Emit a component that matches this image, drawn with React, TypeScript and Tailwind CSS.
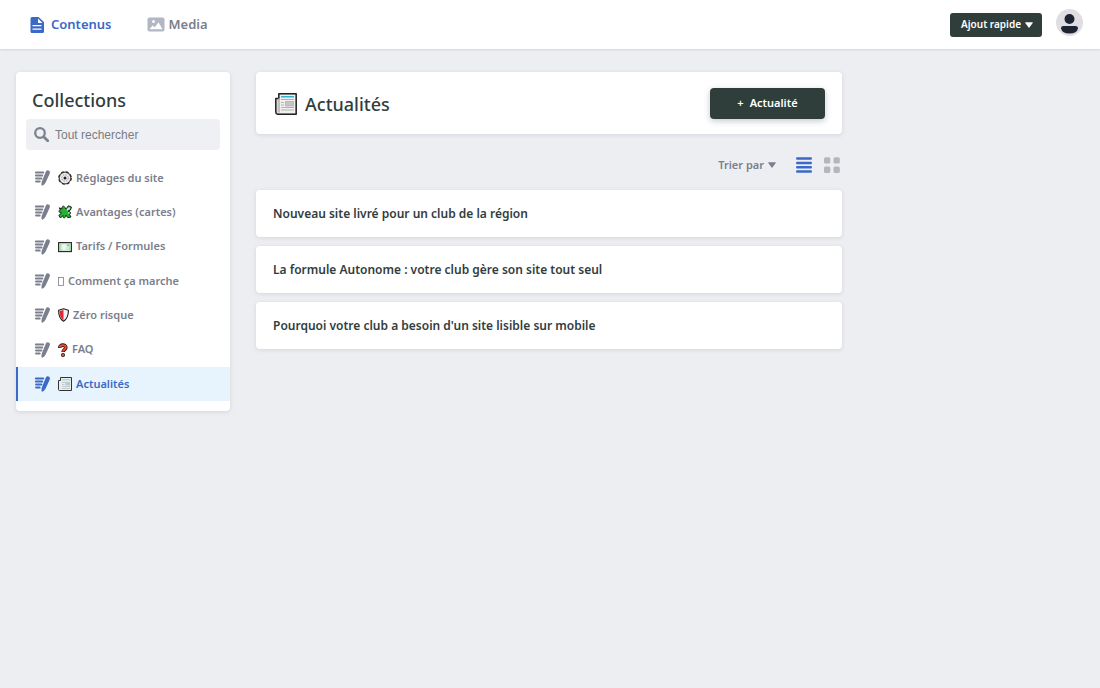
import React from 'react';

type IconProps = { className?: string };

const FileIcon = () => (
  <svg viewBox="0 0 14 16" className="h-4 w-[14px] shrink-0" aria-hidden="true">
    <path fill="currentColor" d="M2 0H8.500L14 5V14.500A1.500 1.500 0 0 1 12.500 16H2A1.500 1.500 0 0 1 .5 14.500V1.500A1.500 1.500 0 0 1 2 0Z" />
    <path fill="#fff" d="M8 1.500V6H12.500Z M2.500 8H11.500V9.200H2.500Z M2.500 11.500H11.500V12.700H2.500Z" />
  </svg>
);

const MediaIcon = () => (
  <svg viewBox="0 0 18 15" className="h-[15px] w-[18px] shrink-0 text-[#b3b6c3]" aria-hidden="true">
    <rect x=".5" y=".5" width="17" height="14" rx="2" fill="currentColor" />
    <circle cx="6.500" cy="4.500" r="1.500" fill="#fff" />
    <path fill="#fff" d="M2.500 12.300 5.500 8.500 7.800 10.300 11.500 5.300 15.500 12.300Z" />
  </svg>
);

const SearchIcon = () => (
  <svg viewBox="0 0 15 15" className="h-[15px] w-[15px] shrink-0 text-[#7b8290]" fill="none" stroke="currentColor" aria-hidden="true">
    <circle cx="6" cy="6" r="4.800" strokeWidth="2.300" />
    <path d="m9.700 9.700 4 4" strokeWidth="2.800" strokeLinecap="round" />
  </svg>
);

const WriteIcon = () => (
  <svg viewBox="0 0 16 16" className="h-4 w-4 shrink-0" aria-hidden="true">
    <path d="M1.800 2.500H9.300M1.800 5.500H8.300M2 8.500H7.500M2 11.500H5.800" stroke="currentColor" strokeWidth="1.800" strokeLinecap="round" />
    <path fill="currentColor" d="M12 1.200C12.900-.5 16.300.4 15.900 2.700L15.300 4.600 11.500 12.800Q10.500 14.600 8.300 15.700L7.600 15.200Q7.200 13.200 8 11Z" />
  </svg>
);

const CaretIcon = ({ className }: IconProps) => (
  <svg viewBox="0 0 8 6" className={className} aria-hidden="true">
    <path fill="currentColor" d="M.5.300H7.500Q8 .3 7.700.9L4.400 5.500Q4 6 3.600 5.500L.3.900Q0 .3.500.3Z" />
  </svg>
);

const GearEmoji = () => (
  <svg viewBox="0 0 14 14" className="h-[14px] w-[14px]" aria-hidden="true">
    <circle cx="7" cy="7" r="5.800" fill="#eee" stroke="#555" strokeWidth="1.200" />
    <circle cx="7" cy="7" r="6.300" fill="none" stroke="#222" strokeWidth="1.100" strokeDasharray="2.900 2.048" />
    <circle cx="7" cy="7" r="3.200" fill="none" stroke="#999" strokeWidth="1" strokeDasharray="1.500 1" />
    <circle cx="7" cy="7" r="1.500" fill="#222" />
  </svg>
);

const PuzzleEmoji = () => (
  <svg viewBox="0 0 14 14" className="h-[14px] w-[14px]" aria-hidden="true">
    <path fill="#28b030" stroke="#15251a" strokeWidth="1" strokeLinejoin="round" d="M1.200 2.800 4 4C3.500.6 6.500.2 7 3.200L8.300 3.700 10.300.8 13.400 2 12.500 5 10 6.200C12.500 6.200 13.500 8.500 11.500 9.400L13 12 9.800 12.700 8 10.200C7.600 13.800 4.300 13.500 5 10.500L2.500 13 .8 10.500 3.500 8C.5 7.800.3 5 2.500 5.200Z" />
    <path fill="#c9e7f2" d="m9.300 3.600 1.500-1.400 1.500.5-.5 1.500-2 1.400-1.300-.4Z" />
    <path fill="#c9e7f2" d="M10 7.200H11.500V8.400H10Z" />
  </svg>
);

const MoneyEmoji = () => (
  <svg viewBox="0 0 14 14" className="h-[14px] w-[14px]" aria-hidden="true">
    <rect x=".6" y="2.600" width="12.800" height="9" fill="#cdeed2" stroke="#222" strokeWidth="1.100" />
    <path fill="#9ad6a6" d="M1.500 3.500H4L2.500 5V9L4 10.500H1.500Z M12.500 3.500H11L11.500 5V9L11 10.500H12.500Z" />
    <ellipse cx="6" cy="7" rx="2" ry="2.800" fill="#f3f8f4" />
    <path fill="#75c66b" d="M9 4.500H11V6H9.500Z" />
  </svg>
);

const ShieldEmoji = () => (
  <svg viewBox="0 0 11 14" className="h-[14px] w-[11px]" aria-hidden="true">
    <path fill="#f2f2f2" d="M5.500 1 10.400 2.300C10.500 7 9.500 11 5.500 13.300 1.500 11 .5 7 .6 2.300Z" />
    <path fill="#df2736" d="M5.500 2V12.500C2.700 10.500 1.500 7.500 1.600 3Z" />
    <path fill="none" stroke="#222" strokeWidth="1.100" strokeLinejoin="round" d="M5.500.7 10.400 2.300C10.500 7 9.500 11 5.500 13.300 1.500 11 .5 7 .6 2.300Z" />
  </svg>
);

const QuestionEmoji = () => (
  <svg viewBox="0 0 10 14" className="h-[14px] w-[10px]" aria-hidden="true">
    <path d="M1.800 4.800C1.500 1.300 8 1.200 7.800 4.600 7.700 6.700 5.200 6.500 5.100 9" fill="none" stroke="#261a18" strokeWidth="3.600" />
    <circle cx="5" cy="12" r="2" fill="#261a18" />
    <path d="M1.800 4.300C1.900 1.700 7.700 1.500 7.800 4.500 7.700 6.600 5.200 6.500 5.100 8.500" fill="none" stroke="#ee4b32" strokeWidth="2" />
    <circle cx="5" cy="12" r="1.200" fill="#ee4b32" />
  </svg>
);

const NewsEmoji = ({ className }: IconProps) => (
  <svg viewBox="0 0 22 22" className={className} aria-hidden="true">
    <path fill="#d7d7d7" stroke="#222" strokeWidth="1.500" strokeLinejoin="round" d="M3.800.8H21.200V21.200H2.500Q.8 21 .8 19V5.500H3.800Z" />
    <path fill="#f0f0f0" d="M5 2H20V20H5Z" />
    <path stroke="#aaa" d="M4 5V19" />
    <path fill="#35b3ce" d="M6 3H19V4.500H6Z" />
    <path stroke="#aaa" strokeWidth=".9" d="M6 6.500H19M6 9.500H9M6 12H9M6 14.500H19M6 17H19" />
    <path fill="#c5c5c5" stroke="#aaa" strokeWidth=".7" d="M10.500 8.500H18.500V13H10.500Z" />
  </svg>
);

const SmallNewsEmoji = () => (
  <svg viewBox="0 0 14 14" className="h-[14px] w-[14px]" aria-hidden="true">
    <path fill="#ececec" stroke="#333" strokeLinejoin="round" d="M2.500.5H13.500V13.500H1.500Q.5 13.500 .5 12.500V3.500H2.500Z" />
    <path fill="#a9dde3" d="M4 2H12.500V3.500H4Z" />
    <path stroke="#b5c4c5" strokeWidth=".8" d="M4 5.500H12M4 7.500H6.500M4 9.500H12M4 11.500H12" />
    <path fill="#b5cccd" d="M7.500 5H12V8.500H7.500Z" />
  </svg>
);

const MissingGlyph = () => (
  <svg viewBox="0 0 6 14" className="h-[14px] w-[6px]" aria-hidden="true">
    <rect x=".5" y="3.500" width="5" height="8" fill="none" stroke="currentColor" strokeWidth=".8" />
  </svg>
);

const collections = [
  { label: 'Réglages du site', icon: <GearEmoji /> },
  { label: 'Avantages (cartes)', icon: <PuzzleEmoji /> },
  { label: 'Tarifs / Formules', icon: <MoneyEmoji /> },
  { label: 'Comment ça marche', icon: <MissingGlyph /> },
  { label: 'Zéro risque', icon: <ShieldEmoji /> },
  { label: 'FAQ', icon: <QuestionEmoji /> },
  { label: 'Actualités', icon: <SmallNewsEmoji />, active: true },
];

const entries = [
  'Nouveau site livré pour un club de la région',
  'La formule Autonome : votre club gère son site tout seul',
  "Pourquoi votre club a besoin d'un site lisible sur mobile",
];

function Header() {
  return (
    <header className="flex h-[49px] items-center justify-between bg-white pr-[17px] pl-[30px] shadow-[0_1px_2px_rgba(68,74,87,0.15)]">
      <nav className="flex items-center gap-[35px] text-[13px] font-semibold">
        <a href="#contenus" className="flex items-center gap-[7px] text-[#3a69c7]"><FileIcon />Contenus</a>
        <a href="#media" className="flex items-center gap-1 text-[#7b7e8c]"><MediaIcon />Media</a>
      </nav>
      <div className="flex items-center gap-[14px]">
        <button type="button" className="flex h-6 items-center gap-1 rounded-[3px] bg-[#2f3e3b] pr-[9px] pl-[11px] text-[10px] font-semibold whitespace-nowrap text-white">
          Ajout rapide<CaretIcon className="h-[6px] w-2" />
        </button>
        <button type="button" aria-label="Compte" className="mb-1 block">
          <svg viewBox="0 0 27 27" className="h-[27px] w-[27px]" aria-hidden="true">
            <circle cx="13.500" cy="13.500" r="13.500" fill="#dfdfe3" />
            <circle cx="13.500" cy="10" r="5" fill="#1e2532" />
            <path fill="#1e2532" d="M7.500 17H19.500Q22 17 22 19.300 21 24.500 13.500 24.500 6 24.500 5 19.300 5 17 7.500 17Z" />
          </svg>
        </button>
      </div>
    </header>
  );
}

function Sidebar() {
  return (
    <aside className="w-[214px] shrink-0 rounded-[4px] bg-white pt-4 pb-[10px] shadow-[0_1px_4px_rgba(68,74,87,0.15)]">
      <h2 className="px-4 text-lg leading-6 font-medium text-[#313d3e]">Collections</h2>
      <label className="mx-[10px] mt-[7px] flex h-[31px] items-center gap-[6px] rounded-[4px] bg-[#eff0f4] px-2">
        <SearchIcon />
        <input type="search" aria-label="Tout rechercher" placeholder="Tout rechercher" className="min-w-0 flex-1 bg-transparent font-['Liberation_Sans',sans-serif] text-xs text-[#313d3e] outline-none placeholder:text-[#7b7d82]" />
      </label>
      <ul className="mt-[11px] grid min-h-[240px] auto-rows-fr">
        {collections.map((item) => (
          <li key={item.label} className="flex">
            <a
              href="#collection"
              className={
                item.active
                  ? 'flex flex-1 items-center border-l-2 border-[#3a69c7] bg-[#e8f4fd] pl-4 text-[11px] font-semibold text-[#3a69c7]'
                  : 'flex flex-1 items-center border-l-2 border-transparent pl-4 text-[11px] font-semibold text-[#7b7e8c]'
              }
            >
              <WriteIcon />
              <span className="ml-2 flex items-center gap-1">{item.icon}{item.label}</span>
            </a>
          </li>
        ))}
      </ul>
    </aside>
  );
}

export default function App() {
  return (
    <div className="min-h-screen bg-[#eceef2] font-['Noto_Sans',sans-serif] text-[#313d3e]">
      <Header />
      <div className="flex items-start gap-[26px] px-4 pt-[23px]">
        <Sidebar />
        <main className="max-w-[586px] min-w-0 flex-1">
          <div className="flex h-[62px] items-center justify-between rounded-[4px] bg-white pr-[17px] pl-[19px] shadow-[0_1px_4px_rgba(68,74,87,0.15)]">
            <h1 className="flex items-center gap-2 pt-0.5 text-lg font-medium"><NewsEmoji className="h-[22px] w-[22px]" />Actualités</h1>
            <button type="button" className="flex h-[31px] w-[115px] items-center justify-center gap-[6px] rounded-[4px] bg-[#2f3e3b] text-[11px] font-semibold text-white shadow-[0_2px_6px_rgba(68,74,87,0.3)]"><span>+</span>Actualité</button>
          </div>
          <div className="flex h-14 items-center justify-end pt-[6px] pr-[2px] text-[11px] font-semibold text-[#7b7e8c]">
            <button type="button" className="flex items-center gap-1">Trier par<CaretIcon className="h-[6px] w-2" /></button>
            <button type="button" aria-label="Affichage en liste" className="ml-5 text-[#3a69c7]">
              <svg viewBox="0 0 16 16" className="h-4 w-4" aria-hidden="true">
                <path d="M1.200 1.500H14.800M1.200 6H14.800M1.200 10.200H14.800M1.200 14.500H14.800" stroke="currentColor" strokeWidth="2.400" strokeLinecap="round" />
              </svg>
            </button>
            <button type="button" aria-label="Affichage en grille" className="ml-3 text-[#b5b5bb]">
              <svg viewBox="0 0 16 16" className="h-4 w-4" fill="currentColor" aria-hidden="true">
                <rect width="6.300" height="6.300" y=".3" rx="1.500" /><rect x="9.500" y=".3" width="6.300" height="6.300" rx="1.500" />
                <rect y="9.600" width="6.300" height="6.300" rx="1.500" /><rect x="9.500" y="9.600" width="6.300" height="6.300" rx="1.500" />
              </svg>
            </button>
          </div>
          <ul className="flex flex-col gap-[9px]">
            {entries.map((entry) => (
              <li key={entry}>
                <a href="#entry" className="flex min-h-[47px] items-center rounded-[4px] bg-white px-[17px] text-xs font-semibold shadow-[0_1px_4px_rgba(68,74,87,0.15)]">{entry}</a>
              </li>
            ))}
          </ul>
        </main>
      </div>
    </div>
  );
}
